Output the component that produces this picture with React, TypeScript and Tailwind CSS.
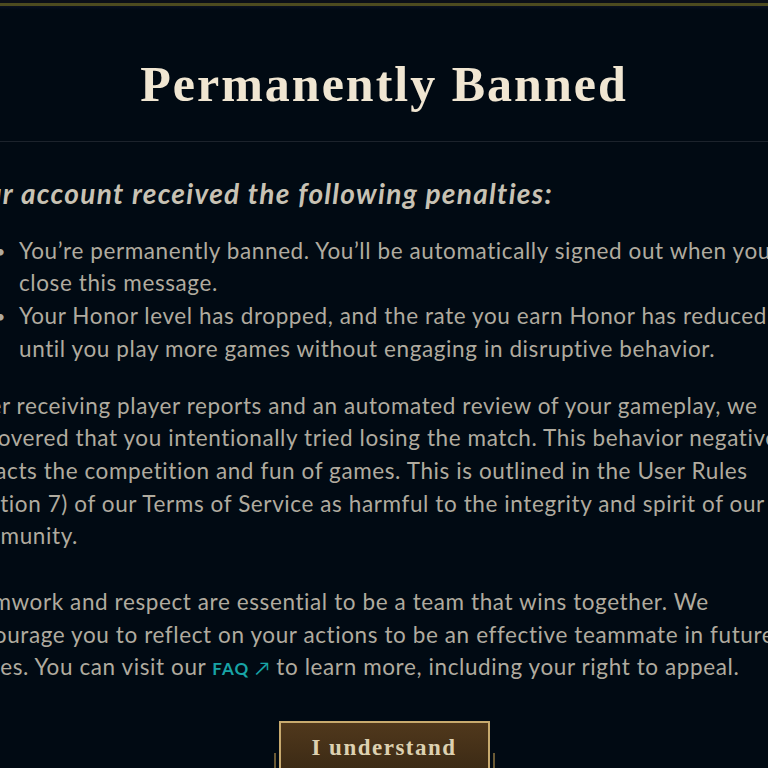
import React from "react";

const body = "font-['Lato','Liberation_Sans',sans-serif]";

function Bullet({ children }: { children: React.ReactNode }) {
  return (
    <div className="flex">
      <span className="w-[62px] shrink-0 text-right pr-[13px] text-[18px]">•</span>
      <div className="whitespace-nowrap">{children}</div>
    </div>
  );
}

export default function App() {
  return (
    <div className="w-[768px] h-[768px] overflow-hidden bg-[#010a13] relative">
      <div className="h-[3px] bg-[#0b0f18]" />
      <div className="h-[3px] bg-[#4d4b20]" />
      <div className="h-[4px] bg-gradient-to-b from-[#0b1022] to-[#010a13]" />
      <div className="h-[131px] flex justify-center pt-[49px]">
        <h1 className="font-['Liberation_Serif',serif] font-bold text-[50px] leading-[50px] tracking-[2px] text-[#f0e6d2]">
          Permanently Banned
        </h1>
      </div>
      <div className="h-px bg-[#1c232c]" />
      <div className={`ml-[-43px] w-[860px] ${body} text-[22.5px] leading-[32.7px] tracking-[0.6px] text-[#b0ab9f]`}>
        <div className="mt-[35px] ml-[-2px] whitespace-nowrap italic font-bold text-[28px] tracking-[1.3px] text-[#c8c2b4]">
          Your account received the following penalties:
        </div>
        <div className="mt-[25px]">
          <Bullet>
            You’re permanently banned. You’ll be automatically signed out when you
            <br />
            close this message.
          </Bullet>
          <Bullet>
            Your Honor level has dropped, and the rate you earn Honor has reduced
            <br />
            until you play more games without engaging in disruptive behavior.
          </Bullet>
        </div>
        <p className="mt-[24px] whitespace-nowrap">
          After receiving player reports and an automated review of your gameplay, we
          <br />
          discovered that you intentionally tried losing the match. This behavior negatively
          <br />
          impacts the competition and fun of games. This is outlined in the User Rules
          <br />
          (Section 7) of our Terms of Service as harmful to the integrity and spirit of our
          <br />
          community.
        </p>
        <p className="mt-[33px] whitespace-nowrap">
          Teamwork and respect are essential to be a team that wins together. We
          <br />
          encourage you to reflect on your actions to be an effective teammate in future
          <br />
          games. You can visit our{" "}
          <span className="text-[#18a4a6] text-[17px] font-bold tracking-[1px]">FAQ</span>
          <span className="text-[#18a4a6] text-[19px] ml-[6px]">↗</span> to learn more, including your right to appeal.
        </p>
      </div>
      <div className="flex justify-center mt-[35px]">
        <div className="relative">
          <div className="absolute left-[-5px] top-[32px] w-[2px] h-[30px] bg-[#6b5a35]" />
          <div className="absolute right-[-5px] top-[32px] w-[2px] h-[30px] bg-[#6b5a35]" />
          <div className="w-[211px] h-[56px] border-2 border-[#c8aa6e] bg-gradient-to-b from-[#50381c] to-[#3a2914] flex justify-center pt-[11px]">
            <span className="font-['Liberation_Serif',serif] font-bold text-[23px] leading-[28px] tracking-[1.5px] text-[#ddd1b1]">
              I understand
            </span>
          </div>
        </div>
      </div>
    </div>
  );
}
